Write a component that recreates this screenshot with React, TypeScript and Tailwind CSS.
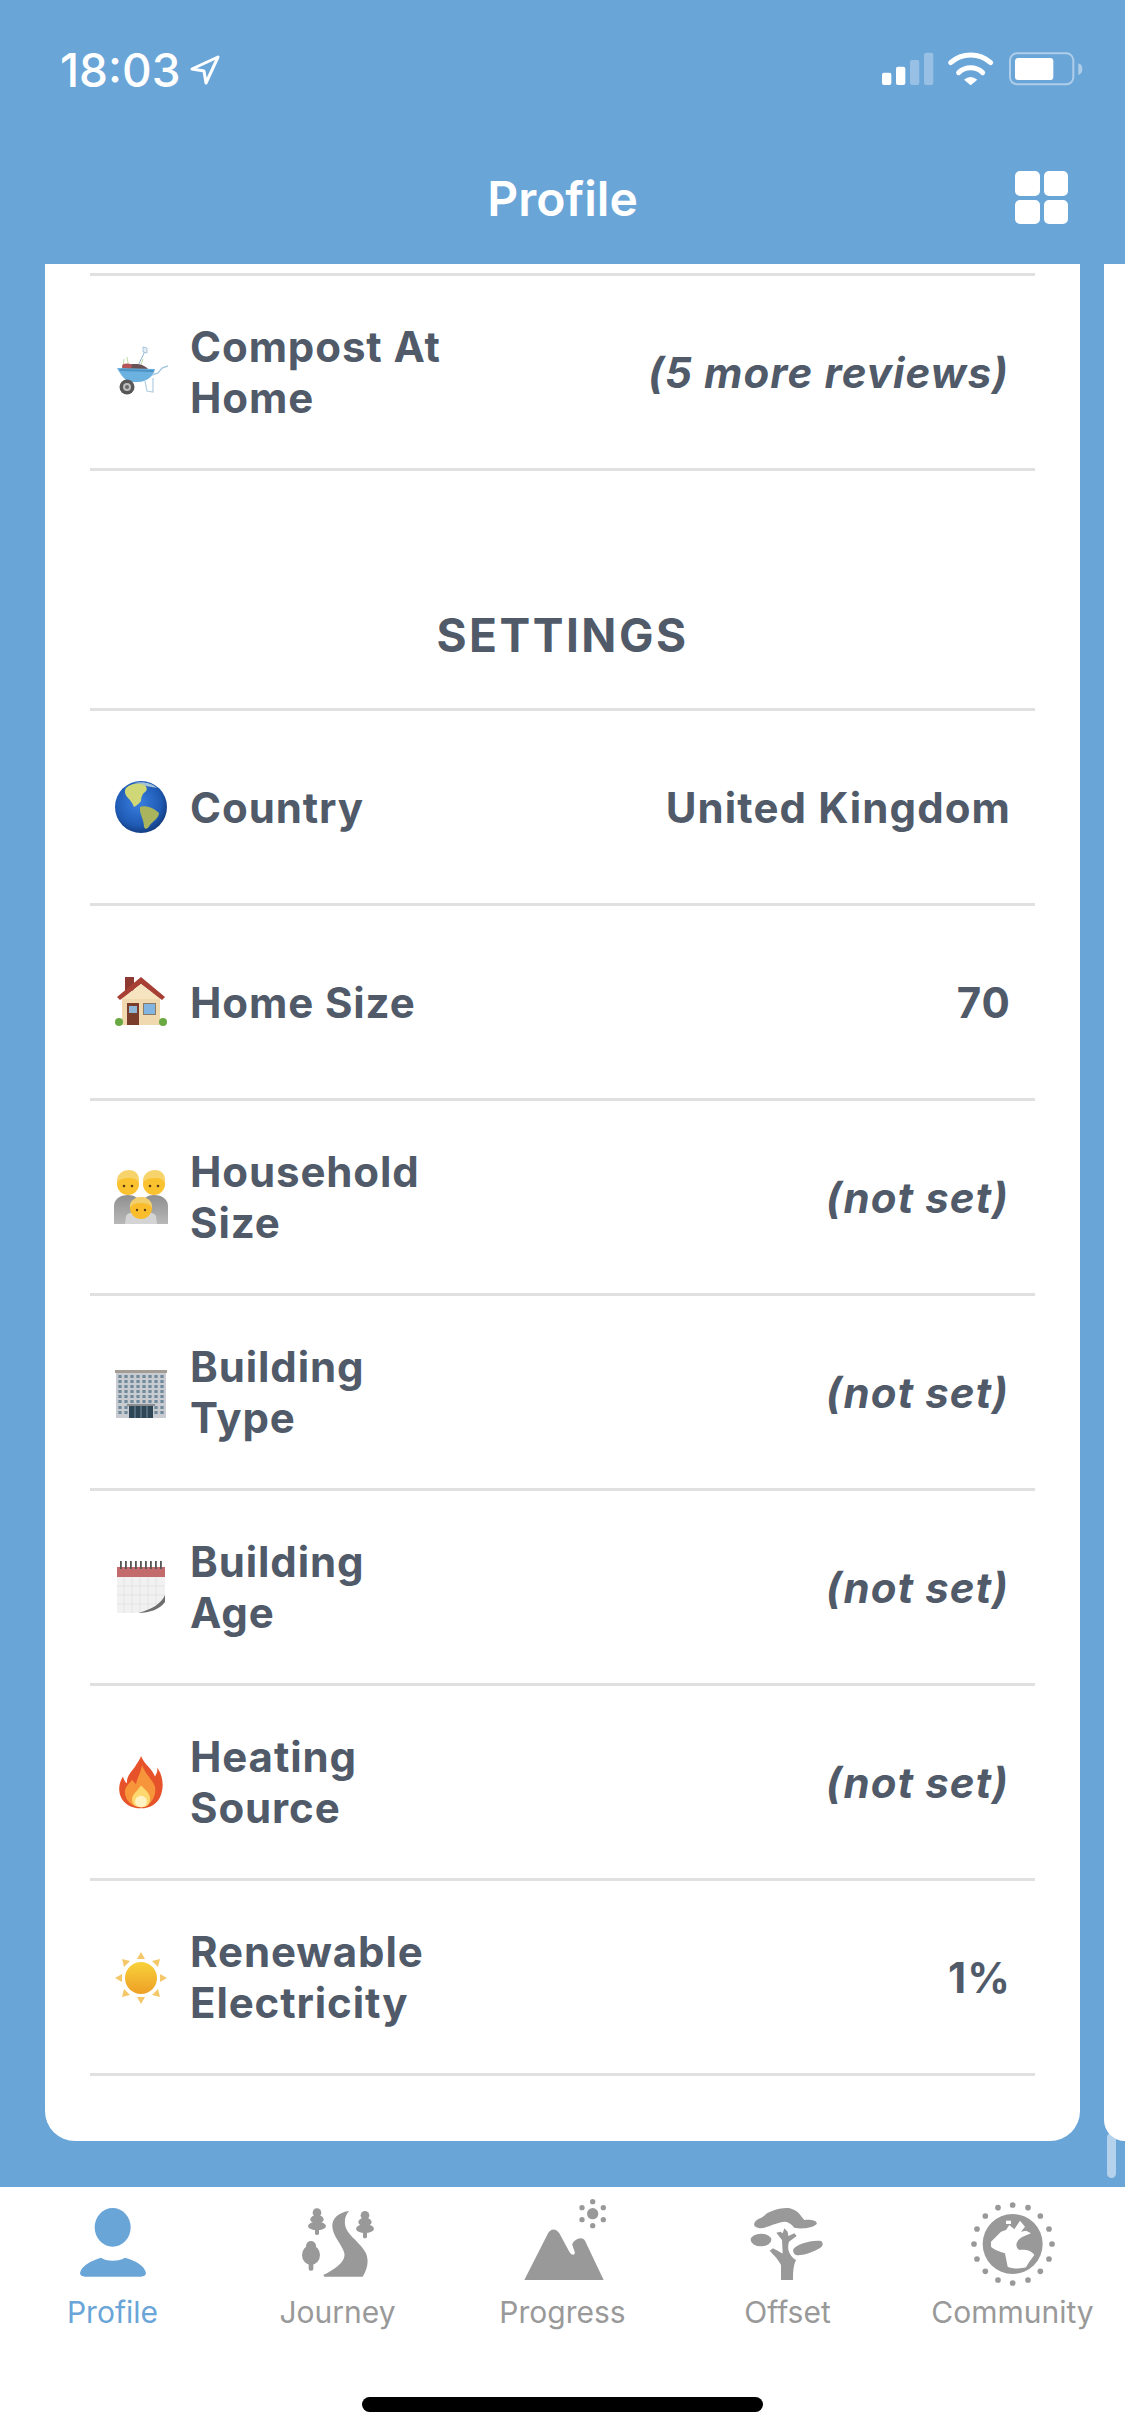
import type { ReactNode } from 'react';

const BLUE = '#6aa5d8';

function Wheelbarrow() {
  return (
    <svg viewBox="0 0 54 54" className="w-[54px] h-[54px]">
      <path d="M31 6 L23 23" stroke="#8fb3cd" strokeWidth="1" />
      <path d="M29 2 L33 3 L33 8 L29 7Z" fill="#e4eef6" stroke="#8fb3cd" strokeWidth="0.7" />
      <path d="M9 23 L10 14 M15 23 L13 12 M26 23 L29 14" stroke="#b4d89a" strokeWidth="0.9" />
      <path d="M7 24 C10 19 22 18 28 20 C31 21 33 23 34 24Z" fill="#6a5254" />
      <ellipse cx="13" cy="21" rx="5" ry="2.5" fill="#b55458" />
      <path d="M3 23 L41 24 C40 31 32 37 24 37 L15 37 C10 34 6 29 3 23Z" fill="#6bb2e0" />
      <path d="M5 24 L40 25 L39 27 L6 26Z" fill="#4b93c4" />
      <path d="M38 30 L44 28 L48 23 L54 21" stroke="#a5c8dd" strokeWidth="1.4" fill="none" />
      <path d="M31 36 L33 46 L39 47 L39 33" stroke="#b0cee0" strokeWidth="1.2" fill="none" />
      <path d="M18 36 L11 41" stroke="#7aa6c4" strokeWidth="1.8" />
      <circle cx="13" cy="42" r="7.5" fill="#575757" />
      <circle cx="13" cy="42" r="4" fill="#bdbdbd" />
      <circle cx="13" cy="42" r="2" fill="#6a6a6a" />
    </svg>
  );
}

function GlobeEmoji() {
  return (
    <svg viewBox="0 0 54 54" className="w-[54px] h-[54px]">
      <defs>
        <radialGradient id="sea" cx="45%" cy="42%" r="60%">
          <stop offset="0%" stopColor="#3a7fe0" />
          <stop offset="72%" stopColor="#1f5bb5" />
          <stop offset="100%" stopColor="#123a7c" />
        </radialGradient>
      </defs>
      <circle cx="27" cy="27" r="26" fill="url(#sea)" />
      <path d="M12 8 C16 4 24 2 30 4 C33 7 34 10 31 12 C28 14 27 18 27 21 C25 24 22 26 20 27 C18 22 16 20 14 18 C11 15 10 11 12 8Z" fill="#cfd777" />
      <path d="M26 27 C31 25 40 28 45 33 C45 38 39 41 36 45 C34 49 31 50 30 47 C30 41 27 36 26 31Z" fill="#a9b45c" />
      <path d="M20 3 C28 1 38 3 43 8 C38 7 30 6 28 4Z" fill="#a6c3d8" />
    </svg>
  );
}

function HouseEmoji() {
  return (
    <svg viewBox="0 0 54 54" className="w-[54px] h-[54px]">
      <rect x="11" y="2" width="9" height="14" fill="#8e3a33" />
      <rect x="8" y="18" width="38" height="32" fill="#f0d9ae" />
      <path d="M27 2 L51 22 L48 25 L27 9 L6 25 L3 22Z" fill="#a83f35" />
      <path d="M27 9 L46 24 L8 24Z" fill="#f6e3c0" />
      <rect x="13" y="28" width="12" height="22" fill="#7a3d2b" />
      <rect x="15" y="31" width="8" height="7" fill="#8fb6d6" />
      <rect x="29" y="28" width="13" height="12" fill="#8a7a66" />
      <rect x="30" y="29" width="11" height="10" fill="#82b4e2" />
      <circle cx="5" cy="47" r="4" fill="#6aa843" />
      <circle cx="49" cy="47" r="4" fill="#6aa843" />
    </svg>
  );
}

function FamilyEmoji() {
  return (
    <svg viewBox="0 0 54 54" className="w-[54px] h-[54px]">
      <defs>
        <linearGradient id="cloth" x1="0" y1="0" x2="0" y2="1">
          <stop offset="0%" stopColor="#8f8f8f" />
          <stop offset="100%" stopColor="#b8b8b8" />
        </linearGradient>
      </defs>
      <path d="M0 54 L0 36 C0 28 8 25 14 25 C20 25 26 28 26 36 L26 54Z" fill="url(#cloth)" />
      <path d="M28 54 L28 36 C28 28 34 25 40 25 C46 25 54 28 54 36 L54 54Z" fill="url(#cloth)" />
      <circle cx="14" cy="14" r="11" fill="#fbc22f" />
      <path d="M3 13 C2 4 9 0 15 0 C22 0 26 5 25 13 C23 9 20 8 15 8 C10 8 5 9 3 13Z" fill="#f6d36b" />
      <circle cx="40" cy="14" r="11" fill="#fbc22f" />
      <path d="M29 13 C28 4 35 0 41 0 C48 0 52 5 51 13 C49 9 46 8 41 8 C36 8 31 9 29 13Z" fill="#f6d36b" />
      <path d="M11 54 L12 46 C14 40 40 40 42 46 L43 54Z" fill="#d4d4d4" />
      <circle cx="27" cy="38" r="11" fill="#f9bd2c" />
      <path d="M16 38 C15 31 21 27 27 27 C33 27 39 31 38 38 C36 34 32 33 27 33 C22 33 18 34 16 38Z" fill="#f1cf6f" />
      <circle cx="10" cy="16" r="1.3" fill="#5a3c14" />
      <circle cx="18" cy="16" r="1.3" fill="#5a3c14" />
      <circle cx="36" cy="16" r="1.3" fill="#5a3c14" />
      <circle cx="44" cy="16" r="1.3" fill="#5a3c14" />
      <circle cx="23" cy="40" r="1.2" fill="#5a3c14" />
      <circle cx="31" cy="40" r="1.2" fill="#5a3c14" />
    </svg>
  );
}

function BuildingEmoji() {
  const cols = [6, 12, 18, 24, 30, 36, 42, 48];
  const rows = [11, 16, 21, 26, 31, 36, 42, 47];
  return (
    <svg viewBox="0 0 54 54" className="w-[54px] h-[54px]">
      <rect x="1" y="5" width="52" height="3" fill="#a39d96" />
      <rect x="2" y="8" width="50" height="45" fill="#c8ccd0" />
      {rows.map((y) =>
        cols.map((x) => <rect key={`${x}-${y}`} x={x - 1.6} y={y - 1} width="3.2" height="3" fill="#70899c" />),
      )}
      <rect x="15" y="41" width="24" height="12" fill="#2f4656" />
      <rect x="13" y="39" width="28" height="2" fill="#8b8f92" />
      <path d="M21 41 V53 M27 41 V53 M33 41 V53" stroke="#8aa3b3" strokeWidth="0.8" />
    </svg>
  );
}

function CalendarEmoji() {
  const rings = [6, 11, 16, 21, 26, 31, 36, 41, 46];
  return (
    <svg viewBox="0 0 54 54" className="w-[54px] h-[54px]">
      <rect x="3" y="8" width="48" height="45" fill="#f1f1f1" />
      <rect x="3" y="7" width="48" height="10" fill="#c26a6c" />
      {rings.map((x) => (
        <rect key={x} x={x} y="1" width="1.8" height="8" fill="#555" />
      ))}
      <path d="M10 17 V53 M18 17 V53 M26 17 V53 M34 17 V53 M42 17 V53 M3 26 H51 M3 35 H51 M3 44 H51" stroke="#dcdcdc" strokeWidth="0.6" />
      <path d="M51 35 C47 45 36 49 22 53 L51 53Z" fill="#ffffff" />
      <path d="M51 35 C47 44 38 49 24 53 C36 53 46 49 51 42Z" fill="#6e6e6e" />
    </svg>
  );
}

function FireEmoji() {
  return (
    <svg viewBox="0 0 54 54" className="w-[54px] h-[54px]">
      <g transform="translate(0,-2.5) scale(1,1.14)">
        <path d="M27 3 C30 10 38 14 41 21 C43 18 44 16 43 13 C49 20 50 30 47 37 C44 45 36 49 27 49 C17 49 9 45 6 37 C4 31 6 25 9 21 C10 24 11 26 13 27 C12 20 20 15 22 11 C24 8 26 6 27 3Z" fill="#e6522a" />
        <path d="M28 11 C31 19 38 23 41 30 C43 38 36 48 27 48 C17 48 10 41 11 33 C13 28 16 27 18 24 C20 26 21 27 22 28 C23 22 27 18 28 11Z" fill="#f7953a" />
        <path d="M27 29 C32 33 37 37 36 42 C35 47 31 48 27 48 C22 48 18 46 18 41 C18 37 23 34 27 29Z" fill="#fdd86e" />
        <ellipse cx="27" cy="43" rx="6" ry="5" fill="#fff3c4" />
      </g>
    </svg>
  );
}

function SunEmoji() {
  return (
    <svg viewBox="0 0 54 54" className="w-[54px] h-[54px]">
      <defs>
        <linearGradient id="sunfill" x1="0" y1="0" x2="0" y2="1">
          <stop offset="0%" stopColor="#f8d23a" />
          <stop offset="100%" stopColor="#ee9f26" />
        </linearGradient>
      </defs>
      <circle cx="27" cy="28" r="16" fill="url(#sunfill)" />
      <g fill="#f4c869">
        <path d="M27 2 L31 9 L23 9Z" />
        <path d="M27 54 L31 47 L23 47Z" />
        <path d="M1 28 L8 24 L8 32Z" />
        <path d="M53 28 L46 24 L46 32Z" />
        <path d="M8 9 L16 11 L10 17Z" />
        <path d="M46 9 L38 11 L44 17Z" />
        <path d="M8 47 L16 45 L10 39Z" />
        <path d="M46 47 L38 45 L44 39Z" />
      </g>
    </svg>
  );
}

function StatusIcons() {
  return (
    <svg viewBox="0 0 720 180" className="w-[240px] h-[60px]">
      <rect x="66" y="98" width="28" height="37" rx="6" fill="#fff" />
      <rect x="108" y="80" width="28" height="55" rx="6" fill="#fff" />
      <rect x="150" y="60" width="28" height="75" rx="6" fill="#fff" opacity="0.3" />
      <rect x="192" y="38" width="28" height="97" rx="6" fill="#fff" opacity="0.3" />
      <path d="M272 68 A 90 90 0 0 1 392 68" fill="none" stroke="#fff" strokeWidth="15" strokeLinecap="round" />
      <path d="M296 98 A 52 52 0 0 1 368 98" fill="none" stroke="#fff" strokeWidth="15" strokeLinecap="round" />
      <path d="M312 119 Q332 103 352 119 L332 136Z" fill="#fff" />
      <rect x="450" y="40" width="190" height="93" rx="21" fill="none" stroke="#fff" strokeWidth="6" opacity="0.45" />
      <rect x="465" y="54" width="115" height="66" rx="10" fill="#fff" />
      <path d="M655 70 C664 73 667 80 667 87 C667 95 664 102 655 105Z" fill="#fff" opacity="0.45" />
    </svg>
  );
}

function ProfileIcon({ color }: { color: string }) {
  return (
    <svg viewBox="-9 0 450 270" className="w-[150px] h-[90px]" fill={color}>
      <ellipse cx="215" cy="112" rx="54" ry="58" />
      <path d="M117 250 C120 228 150 212 180 203 C195 215 235 215 252 203 C285 212 312 228 315 250 C315 256 308 260 300 260 L132 260 C124 260 117 256 117 250Z" />
    </svg>
  );
}

function JourneyIcon({ color }: { color: string }) {
  return (
    <svg viewBox="666 0 450 270" className="w-[150px] h-[90px]" fill={color}>
      <circle cx="828" cy="68" r="13" />
      <ellipse cx="828" cy="88" rx="20" ry="13" />
      <ellipse cx="828" cy="108" rx="27" ry="13" />
      <rect x="822" y="110" width="12" height="25" rx="5" />
      <circle cx="972" cy="76" r="13" />
      <ellipse cx="972" cy="96" rx="20" ry="13" />
      <ellipse cx="972" cy="116" rx="27" ry="13" />
      <rect x="966" y="118" width="12" height="27" rx="5" />
      <circle cx="810" cy="168" r="15" />
      <ellipse cx="810" cy="195" rx="27" ry="30" />
      <rect x="803" y="215" width="14" height="27" rx="6" />
      <path d="M925 63 C895 66 872 85 874 110 C876 140 905 165 910 190 C915 215 880 240 847 255 L850 260 L965 260 C978 240 985 215 975 190 C960 160 925 140 915 115 C908 95 912 75 925 63Z" />
    </svg>
  );
}

function ProgressIcon({ color }: { color: string }) {
  const dots = [
    [275, 35],
    [307, 53],
    [307, 89],
    [275, 107],
    [243, 89],
    [243, 53],
  ];
  return (
    <svg viewBox="-39 0 450 270" className="w-[150px] h-[90px]" fill={color}>
      <path d="M70 270 L140 132 C148 114 165 114 175 130 L205 185 C210 196 224 198 221 185 L214 165 C212 155 240 133 252 152 L308 270Z" />
      <circle cx="275" cy="71" r="17" />
      {dots.map(([x, y]) => (
        <circle key={`${x}-${y}`} cx={x} cy={y} r="8" />
      ))}
    </svg>
  );
}

function OffsetIcon({ color }: { color: string }) {
  return (
    <svg viewBox="636 0 450 270" className="w-[150px] h-[90px]" fill={color}>
      <path d="M760 100 C765 85 785 85 795 72 C815 60 855 48 875 58 C895 65 900 80 910 90 C930 88 950 92 947 102 C935 115 900 118 880 113 C870 100 860 95 850 95 C825 98 800 112 780 115 C765 113 757 108 760 100Z" />
      <ellipse cx="780" cy="150" rx="31" ry="19" />
      <path d="M877 178 C885 165 925 150 960 153 C970 160 965 172 950 178 C930 190 900 198 885 195 C878 192 875 185 877 178Z" />
      <path d="M840 270 L840 225 C830 205 818 195 806 182 L816 175 C830 182 840 190 845 190 L843 150 L826 128 L838 125 L845 130 L850 115 L860 125 L862 138 L880 130 L887 138 L864 155 C858 175 862 195 885 210 C878 225 876 240 876 270Z" />
    </svg>
  );
}

function CommunityIcon({ color }: { color: string }) {
  const dots = [
    [185, 45],
    [231, 53],
    [268, 78],
    [294, 117],
    [303, 162],
    [294, 207],
    [268, 244],
    [231, 270],
    [185, 279],
    [141, 270],
    [103, 244],
    [78, 207],
    [69, 162],
    [78, 117],
    [103, 78],
    [141, 53],
  ];
  return (
    <svg viewBox="-39 0 450 290" className="w-[150px] h-[96.7px] -mb-[6.7px]" fill={color}>
      <circle cx="185" cy="162" r="90" />
      <path d="M120 155 L150 125 L165 120 L175 105 L190 118 L207 92 L222 110 L210 125 L225 122 L240 130 L215 140 C195 150 190 170 205 180 C220 178 240 180 250 195 L235 215 L225 232 C205 238 180 235 170 230 L162 190 C150 185 130 180 120 170Z" fill="#fff" />
      <rect x="165" y="92" width="15" height="10" fill="#fff" />
      {dots.map(([x, y]) => (
        <circle key={`${x}-${y}`} cx={x} cy={y} r="8.5" />
      ))}
    </svg>
  );
}

const rows: { icon: ReactNode; label: string; value: string; muted?: boolean }[] = [
  { icon: <GlobeEmoji />, label: 'Country', value: 'United Kingdom' },
  { icon: <HouseEmoji />, label: 'Home Size', value: '70' },
  { icon: <FamilyEmoji />, label: 'Household Size', value: '(not set)', muted: true },
  { icon: <BuildingEmoji />, label: 'Building Type', value: '(not set)', muted: true },
  { icon: <CalendarEmoji />, label: 'Building Age', value: '(not set)', muted: true },
  { icon: <FireEmoji />, label: 'Heating Source', value: '(not set)', muted: true },
  { icon: <SunEmoji />, label: 'Renewable Electricity', value: '1%' },
];

function Row({ icon, label, value, muted }: { icon: ReactNode; label: string; value: string; muted?: boolean }) {
  return (
    <div className="h-[195px] border-b-[3px] border-[#e0e0e0] flex items-center pl-[24px] pr-[26px] text-[#505a69]">
      <div className="w-[54px] h-[54px] shrink-0">{icon}</div>
      <div className="ml-[22px] w-[258px] text-[42px] leading-[51px] font-bold tracking-[0.9px]">{label}</div>
      <div className={`ml-auto text-[42px] leading-[51px] font-bold tracking-[1.1px] ${muted ? 'italic' : '-mr-[2px]'}`}>{value}</div>
    </div>
  );
}

const tabs = [
  { label: 'Profile', Icon: ProfileIcon, active: true },
  { label: 'Journey', Icon: JourneyIcon },
  { label: 'Progress', Icon: ProgressIcon },
  { label: 'Offset', Icon: OffsetIcon },
  { label: 'Community', Icon: CommunityIcon },
];

export default function App() {
  return (
    <div className="w-[1125px] h-[2436px] flex flex-col overflow-hidden bg-[#6aa5d8] font-['Inter',sans-serif]">
      <div className="h-[264px] shrink-0 text-white">
        <div className="h-[100px] pt-[40px] pl-[60px] pr-[25px] flex items-start justify-between">
          <div className="flex items-center h-[60px]">
            <span className="text-[46px] leading-[60px] font-medium">18:03</span>
            <svg viewBox="0 0 32 32" className="w-[32px] h-[32px] ml-[8px]" fill="none" stroke="#fff" strokeWidth="3" strokeLinejoin="round">
              <path d="M3 15 L29 3 L17 29 L15 17Z" />
            </svg>
          </div>
          <StatusIcons />
        </div>
        <div className="h-[100px] mt-[49px] relative flex items-center justify-center">
          <span className="text-[48px] leading-[56px] font-semibold">Profile</span>
          <div className="absolute left-[1015px] top-[22px] w-[53px] grid grid-cols-2 gap-[4px]">
            <div className="h-[24.5px] bg-white rounded-[5px]" />
            <div className="h-[24.5px] bg-white rounded-[5px]" />
            <div className="h-[24.5px] bg-white rounded-[5px]" />
            <div className="h-[24.5px] bg-white rounded-[5px]" />
          </div>
        </div>
      </div>

      <div className="h-[1923px] shrink-0 relative flex pl-[45px] pb-[46px] gap-[24px]">
        <div className="w-[1035px] shrink-0 bg-white rounded-b-[30px] pt-[9px] px-[45px]">
          <div className="border-t-[3px] border-[#e0e0e0]">
            <Row icon={<Wheelbarrow />} label="Compost At Home" value="(5 more reviews)" muted />
          </div>
          <div className="h-[240px] border-b-[3px] border-[#e0e0e0] flex items-end justify-center pb-[45px]">
            <h2 className="text-[46px] leading-[56px] font-bold tracking-[2.5px] text-[#505a69]">SETTINGS</h2>
          </div>
          {rows.map((r) => (
            <Row key={r.label} {...r} />
          ))}
        </div>
        <div className="w-[21px] shrink-0 bg-white rounded-bl-[30px]" />
        <div className="absolute left-[1107px] top-[1869px] w-[9px] h-[45px] rounded-full bg-white/50" />
      </div>

      <div className="h-[249px] shrink-0 bg-white flex flex-col items-center pt-[3px]">
        <div className="w-full flex">
          {tabs.map(({ label, Icon, active }) => (
            <div key={label} className="w-[225px] flex flex-col items-center">
              <Icon color={active ? BLUE : '#999999'} />
              <span className={`mt-[12px] text-[30px] leading-[40px] ${active ? 'text-[#6aa5d8]' : 'text-[#999999]'}`}>{label}</span>
            </div>
          ))}
        </div>
        <div className="mt-[65px] w-[401px] h-[15px] bg-black rounded-full" />
      </div>
    </div>
  );
}
